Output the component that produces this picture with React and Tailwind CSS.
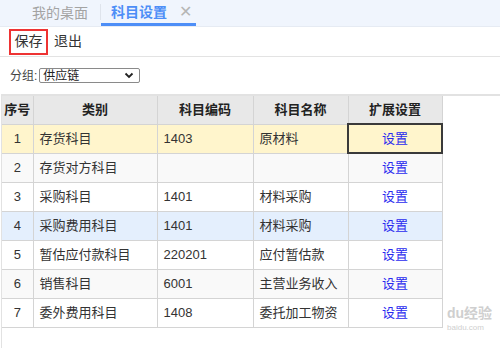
import React from "react";

const ROWS = [
  { no: 1, type: "存货科目", code: "1403", name: "原材料", bg: "bg-[#fff5cc]", selected: true },
  { no: 2, type: "存货对方科目", code: "", name: "", bg: "bg-[#f9f9f9]" },
  { no: 3, type: "采购科目", code: "1401", name: "材料采购", bg: "bg-white" },
  { no: 4, type: "采购费用科目", code: "1401", name: "材料采购", bg: "bg-[#e4effd]" },
  { no: 5, type: "暂估应付款科目", code: "220201", name: "应付暂估款", bg: "bg-white" },
  { no: 6, type: "销售科目", code: "6001", name: "主营业务收入", bg: "bg-[#f9f9f9]" },
  { no: 7, type: "委外费用科目", code: "1408", name: "委托加工物资", bg: "bg-white" },
];

const font = { fontFamily: '"Liberation Sans", "Noto Sans CJK SC", sans-serif' };

const App = () => {
  return (
    <div className="relative w-[500px] h-[348px] bg-white overflow-hidden text-[#333]" style={font}>
      {/* tabs */}
      <div className="h-[27px] bg-[#f0f5fd] border-b border-[#e6ebf3] flex items-end">
        <div className="w-[100px] h-[25px] flex items-center justify-center text-[14px] text-[#a3a3a3] pl-[20px]">
          我的桌面
        </div>
        <div className="w-px h-[16px] bg-[#dfe4ec] self-center mb-[2px]" />
        <div className="w-[95px] h-[25px] flex items-center pl-[10px] gap-[12px] border-b-[3px] border-[#4d8ef7]">
          <span className="text-[14px] font-bold text-[#4d8ef7]">科目设置</span>
          <span className="text-[16px] text-[#b5b5b5] leading-none">✕</span>
        </div>
      </div>

      {/* toolbar */}
      <div className="h-[30px] border-b border-[#e3e3e3] flex items-center pl-[9px] gap-[6px]">
        <div className="h-[26px] w-[39px] border-2 border-[#ee3333] flex items-center justify-center text-[14px] text-[#333]">
          保存
        </div>
        <div className="text-[14px] text-[#333]">退出</div>
      </div>

      {/* filter */}
      <div className="h-[37px] flex items-center pl-[10px] gap-[2px] text-[12px]">
        <span className="text-[#444]">分组:</span>
        <div className="w-[101px] h-[15px] border border-[#8a8a8a] rounded-[2px] flex items-center justify-between px-[3px] text-[12px] text-[#222]">
          <span className="leading-none">供应链</span>
          <svg width="10" height="7" viewBox="0 0 10 7" className="mr-[2px]">
            <path d="M1.5 1.5 L5 5 L8.5 1.5" stroke="#222" strokeWidth="1.8" fill="none" />
          </svg>
        </div>
      </div>

      {/* grid */}
      <div className="ml-[1px] border-t-2 border-l border-[#e2e2e2] h-full">
        <table className="table-fixed border-collapse text-[13px]">
          <colgroup>
            <col className="w-[31px]" />
            <col className="w-[124px]" />
            <col className="w-[96px]" />
            <col className="w-[95px]" />
            <col className="w-[94px]" />
          </colgroup>
          <thead>
            <tr className="bg-[#e8e8e8] h-[28px]">
              {["序号", "类别", "科目编码", "科目名称", "扩展设置"].map((h, i) => (
                <th
                  key={h}
                  className={`font-bold text-[#222] text-center border-b border-r border-[#d4d4d4] ${i === 0 ? "" : "border-l"}`}
                >
                  {h}
                </th>
              ))}
            </tr>
          </thead>
          <tbody>
            {ROWS.map((r) => (
              <tr key={r.no} className={`${r.bg} h-[29px]`}>
                <td className="text-center border-b border-r border-[#d4d4d4]">{r.no}</td>
                <td className="pl-[6px] border border-[#d4d4d4]">{r.type}</td>
                <td className="pl-[6px] border border-[#d4d4d4]">{r.code}</td>
                <td className="pl-[6px] border border-[#d4d4d4]">{r.name}</td>
                <td
                  className={`text-center text-[#2b2bef] border ${
                    r.selected ? "border-[#3a3a3a] border-2" : "border-[#d4d4d4]"
                  }`}
                >
                  设置
                </td>
              </tr>
            ))}
          </tbody>
        </table>
      </div>

      {/* watermark */}
      <div className="absolute left-[447px] top-[306px] text-[#cfcfcf] pointer-events-none">
        <div className="flex items-end text-[14px] font-bold leading-none">
          <span>du</span>
          <span>经验</span>
        </div>
        <div className="text-[8px] mt-[4px] leading-none">baidu.com</div>
      </div>
    </div>
  );
};

export default App;
